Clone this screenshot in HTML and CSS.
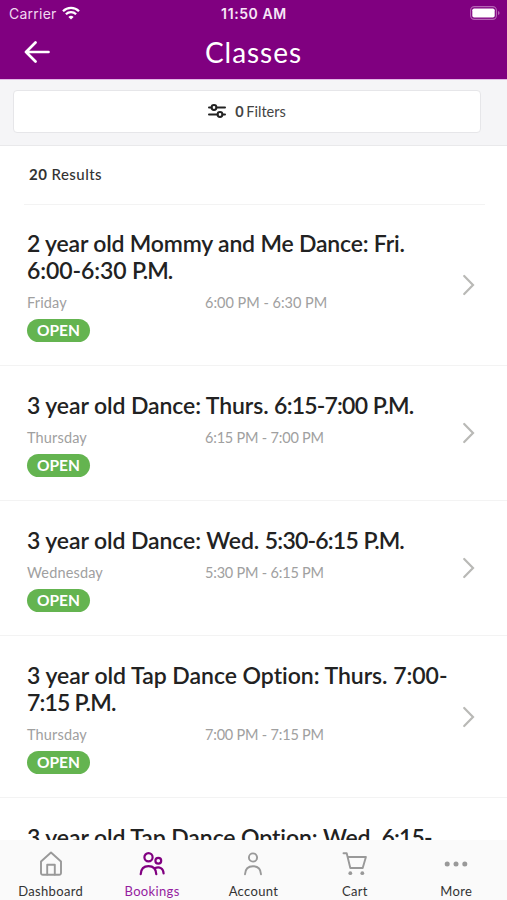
FILE: index.html
```html
<!DOCTYPE html>
<html lang="en">
<head>
    <meta charset="UTF-8">
    <meta name="viewport" content="width=device-width, initial-scale=1.0">
    <title>Classes</title>
    <link rel="stylesheet" href="styles.css">
</head>
<body>
    <header>
        <div class="status-bar">
            <div class="carrier">
                <span>Carrier</span>
                <svg width="18" height="14" viewBox="0 0 18 14" fill="none" stroke="#fff" stroke-width="2.3">
                    <path d="M1 5.2a11.4 11.4 0 0 1 16 0"/>
                    <path d="M3.9 8.2a7.3 7.3 0 0 1 10.2 0"/>
                    <path d="M9 13.6L6.4 10.9a3.8 3.8 0 0 1 5.2 0z" fill="#fff" stroke="none"/>
                </svg>
            </div>
            <span class="clock">11:50 AM</span>
            <div class="battery">
                <svg width="31" height="14" viewBox="0 0 31 14">
                    <rect x="1.6" y=".6" width="25.8" height="12.8" rx="3.8" fill="none" stroke="#b565b5" stroke-width="1.1"/>
                    <rect x="3.3" y="2.4" width="22.4" height="9.2" rx="1.8" fill="#fff"/>
                    <path d="M29 5v4q1.6-.7 1.6-2T29 5z" fill="#b565b5"/>
                </svg>
            </div>
        </div>
        <div class="nav-bar">
            <svg class="back" width="26" height="22" viewBox="0 0 26 22" fill="none" stroke="#fff" stroke-width="2.7" stroke-linecap="round" stroke-linejoin="round">
                <path d="M11.5 1.5L2 11l9.5 9.5M2 11h22.5"/>
            </svg>
            <h1>Classes</h1>
        </div>
    </header>

    <div class="filter-bar">
        <button type="button" class="filter-button">
            <svg width="18" height="14" viewBox="0 0 18 14" fill="none" stroke="#222" stroke-width="2" stroke-linecap="round">
                <path d="M1 3.5h2.5M8.5 3.5H17M1 10.5h8.5M14.5 10.5H17"/>
                <circle cx="6" cy="3.5" r="2.4"/>
                <circle cx="12" cy="10.5" r="2.4"/>
            </svg>
            <span class="filter-text"><b>0</b> Filters</span>
        </button>
    </div>

    <main>
        <div class="results"><b>20</b> Results</div>

        <div class="class-item">
            <div class="info">
                <h2><span class="narrow">2 year old Mommy and Me Dance: Fri.</span><br>6:00-6:30 <span class="pm">P.M.</span></h2>
                <div class="meta"><span class="day">Friday</span><span>6:00 PM - 6:30 PM</span></div>
                <span class="badge">OPEN</span>
            </div>
            <svg class="chevron" width="14" height="22" viewBox="0 0 14 22"><path d="M2.2 2L11 11l-8.8 9"/></svg>
        </div>

        <div class="class-item">
            <div class="info">
                <h2>3 year old Dance: Thurs. <span class="time">6:15-7:00</span> <span class="pm">P.M.</span></h2>
                <div class="meta"><span class="day">Thursday</span><span class="narrow">6:15 PM - 7:00 PM</span></div>
                <span class="badge">OPEN</span>
            </div>
            <svg class="chevron" width="14" height="22" viewBox="0 0 14 22"><path d="M2.2 2L11 11l-8.8 9"/></svg>
        </div>

        <div class="class-item">
            <div class="info">
                <h2>3 year old Dance: Wed. <span class="time">5:30-6:15</span> <span class="pm">P.M.</span></h2>
                <div class="meta"><span class="day">Wednesday</span><span class="narrow">5:30 PM - 6:15 PM</span></div>
                <span class="badge">OPEN</span>
            </div>
            <svg class="chevron" width="14" height="22" viewBox="0 0 14 22"><path d="M2.2 2L11 11l-8.8 9"/></svg>
        </div>

        <div class="class-item">
            <div class="info">
                <h2><span class="wide">3 year old Tap Dance Option: Thurs. 7:00-</span><br><span class="time">7:15 P.M.</span></h2>
                <div class="meta"><span class="day">Thursday</span><span class="narrow">7:00 PM - 7:15 PM</span></div>
                <span class="badge">OPEN</span>
            </div>
            <svg class="chevron" width="14" height="22" viewBox="0 0 14 22"><path d="M2.2 2L11 11l-8.8 9"/></svg>
        </div>

        <div class="class-item">
            <div class="info">
                <h2>3 year old Tap Dance Option: Wed. <span class="time">6:15-</span></h2>
            </div>
        </div>
    </main>

    <nav class="tab-bar">
        <a class="tab">
            <svg width="26" height="26" viewBox="0 0 26 26">
                <path d="M3 10.5L13 1.5l10 9V22a1.8 1.8 0 0 1-1.8 1.8H4.8A1.8 1.8 0 0 1 3 22z"/>
                <path d="M9.2 23.5v-9.7h7.6v9.7"/>
            </svg>
            <span>Dashboard</span>
        </a>
        <a class="tab active">
            <svg width="26" height="26" viewBox="0 0 26 26">
                <circle cx="9.5" cy="6.3" r="4.1"/>
                <circle cx="19.3" cy="9.8" r="2.9"/>
                <path d="M1.7 23.2c.3-5.2 3.3-8 7.8-8s7.5 2.8 7.8 8"/>
                <path d="M16.2 17c4.2-1.9 8.2.3 8.4 5.5"/>
            </svg>
            <span>Bookings</span>
        </a>
        <a class="tab">
            <svg width="26" height="26" viewBox="0 0 26 26">
                <circle cx="13" cy="6.5" r="4.1"/>
                <path d="M5 23.2c.3-5.2 3.5-8 8-8s7.7 2.8 8 8"/>
            </svg>
            <span>Account</span>
        </a>
        <a class="tab">
            <svg width="26" height="26" viewBox="0 0 26 26">
                <path d="M1.5 2.3h3.2L8.3 17h12.4l3.2-11H5.7"/>
                <circle class="dot" cx="8.3" cy="22.2" r="1.9"/>
                <circle class="dot" cx="20.3" cy="22.2" r="1.9"/>
            </svg>
            <span>Cart</span>
        </a>
        <a class="tab">
            <svg width="26" height="26" viewBox="0 0 26 26">
                <circle class="dot" cx="4.2" cy="13" r="2.5"/>
                <circle class="dot" cx="13" cy="13" r="2.5"/>
                <circle class="dot" cx="21.8" cy="13" r="2.5"/>
            </svg>
            <span>More</span>
        </a>
    </nav>
</body>
</html>
```
FILE: styles.css
```css
* {
    box-sizing: border-box;
}
body {
    margin: 0;
    height: 100vh;
    display: flex;
    flex-direction: column;
    overflow: hidden;
    background: #fff;
    color: #222;
    font-family: Lato, sans-serif;
}
header {
    flex: none;
    height: 80px;
    background: #800080;
    border-bottom: 1px solid #e3b9e6;
    color: #fff;
}
.status-bar {
    display: grid;
    grid-template-columns: 1fr auto 1fr;
    align-items: center;
    height: 27px;
    padding: 0 7px 0 9px;
    font-family: Inter, sans-serif;
    font-size: 14px;
}
.carrier {
    display: flex;
    align-items: center;
    gap: 5px;
    color: #f0d9f0;
    letter-spacing: 0.25px;
}
.carrier svg {
    margin-top: -2px;
}
.clock {
    margin-left: -1px;
    font-weight: 600;
    letter-spacing: 0.6px;
    color: #f7e6f7;
}
.battery {
    display: flex;
    justify-content: flex-end;
    margin-top: -2px;
}
.nav-bar {
    display: grid;
    grid-template-columns: 60px 1fr 60px;
    align-items: center;
    height: 49px;
}
.back {
    margin-left: 24px;
}
h1 {
    margin: 0;
    text-align: center;
    font-size: 28px;
    font-weight: 400;
    letter-spacing: 0.95px;
}
.filter-bar {
    flex: none;
    height: 66px;
    padding: 10px 26px 0 13px;
    background: #f5f5f7;
    border-bottom: 1px solid #e9e9eb;
}
.filter-button {
    display: flex;
    align-items: center;
    justify-content: center;
    gap: 9px;
    width: 100%;
    height: 43px;
    padding: 0 0 1px;
    background: #fff;
    border: 1px solid #e6e6e9;
    border-radius: 4px;
    color: #444;
    font-family: inherit;
    font-size: 14.5px;
}
.filter-text {
    word-spacing: -1px;
}
.results {
    height: 59px;
    margin: 0 22px 0 24px;
    padding-left: 5px;
    border-bottom: 1px solid #f3f3f3;
    font-size: 15px;
    font-weight: 500;
    line-height: 56px;
    letter-spacing: 0.45px;
    color: #333;
}
main {
    flex: 1;
    min-height: 0;
    overflow: hidden;
}
.class-item {
    display: flex;
    align-items: center;
    justify-content: space-between;
    padding: 25px 31px 23px 27px;
    border-bottom: 1px solid #f3f3f3;
}
.class-item + .class-item {
    padding-top: 26px;
}
h2 {
    margin: 0;
    font-size: 23px;
    font-weight: 600;
    line-height: 27px;
    letter-spacing: -0.1px;
    white-space: nowrap;
}
.narrow {
    letter-spacing: -0.2px;
}
.wide {
    letter-spacing: -0.03px;
}
.time {
    letter-spacing: -0.8px;
}
.pm {
    letter-spacing: -1px;
}
.meta {
    display: flex;
    margin-top: 10px;
    font-size: 14.5px;
    line-height: 18px;
    color: #a0a0a0;
}
.day {
    width: 178px;
    letter-spacing: 0.15px;
}
.badge {
    display: block;
    width: 63px;
    height: 23px;
    margin-top: 7px;
    border-radius: 12px;
    background: #64b450;
    color: #fff;
    font-size: 15.5px;
    font-weight: 700;
    line-height: 22px;
    text-align: center;
}
.chevron {
    flex: none;
    margin-bottom: 3px;
    fill: none;
    stroke: #b9b9b6;
    stroke-width: 2.2;
    stroke-linecap: round;
}
.tab-bar {
    flex: none;
    display: grid;
    grid-template-columns: repeat(5, 1fr);
    height: 60px;
    padding-top: 11px;
    background: #fafafa;
}
.tab {
    display: flex;
    flex-direction: column;
    align-items: center;
    gap: 6px;
    font-size: 13px;
    line-height: 16px;
    letter-spacing: 0.35px;
    color: #333;
}
.tab svg {
    fill: none;
    stroke: #999;
    stroke-width: 1.9;
    stroke-linecap: round;
    stroke-linejoin: round;
}
.tab .dot {
    fill: #999;
    stroke: none;
}
.active {
    color: #951da0;
}
.tab.active svg {
    stroke: #800080;
    stroke-width: 2.2;
}
```
